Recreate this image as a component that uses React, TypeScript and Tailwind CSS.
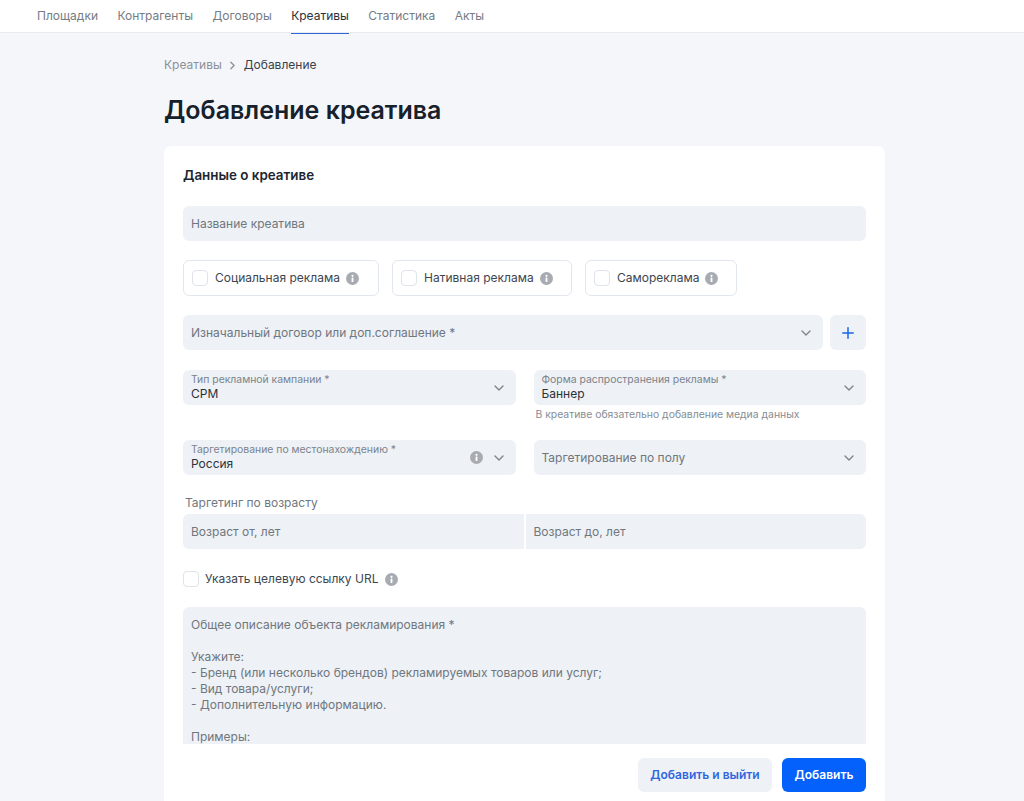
import { ChevronDown, ChevronRight, Plus } from 'lucide-react'

const tabs = ['Площадки', 'Контрагенты', 'Договоры', 'Креативы', 'Статистика', 'Акты']

function InfoIcon() {
  return (
    <svg viewBox="0 0 14 14" className="w-[13px] h-[13px] shrink-0">
      <circle cx="7" cy="7" r="7" fill="#a8acb2" />
      <rect x="6" y="6" width="2" height="4.8" rx="0.5" fill="#fff" />
      <circle cx="7" cy="4.1" r="1.15" fill="#fff" />
    </svg>
  )
}

function CheckCard({ label, width }: { label: string; width: string }) {
  return (
    <div className={`${width} h-[36px] flex items-center pl-[8px] rounded-[6px] border border-[#e2e6ee] bg-white`}>
      <span className="w-[16px] h-[16px] rounded-[4px] border border-[#dfe3ea] bg-white shrink-0" />
      <span className="ml-[7px] mr-[6px] text-[12px] text-[#3d4650]">{label}</span>
      <InfoIcon />
    </div>
  )
}

function Select({ label, value, info }: { label: string; value?: string; info?: boolean }) {
  return (
    <div className="h-[35px] bg-[#eef1f5] rounded-[6px] flex items-center pl-[8px] pr-[9px]">
      <div className="flex-1 min-w-0">
        {value ? (
          <>
            <div className="text-[10.4px] leading-[11px] text-[#7b838c]">{label}</div>
            <div className="mt-[1px] text-[12px] leading-[16px] text-[#2b323a]">{value}</div>
          </>
        ) : (
          <div className="text-[12px] text-[#6f777f]">{label}</div>
        )}
      </div>
      {info && <span className="mr-[8px]"><InfoIcon /></span>}
      <ChevronDown size={16} strokeWidth={2} className="text-[#7d848c]" />
    </div>
  )
}

export default function App() {
  return (
    <div className="h-[801px] overflow-hidden bg-[#f5f6fa] font-['Inter',sans-serif]">
      <nav className="h-[33px] bg-white border-b border-[#e9ebf0] flex gap-[19.4px] pl-[37px]">
        {tabs.map((t) => (
          <div
            key={t}
            className={
              t === 'Креативы'
                ? 'h-[34px] pt-[8px] text-[12px] leading-[16px] text-[#2b323a] border-b border-[#2f66d8]'
                : 'h-[33px] pt-[8px] text-[12px] leading-[16px] text-[#757c84]'
            }
          >
            {t}
          </div>
        ))}
      </nav>

      <main className="w-[721px] ml-[164px]">
        <div className="flex items-center h-[16px] mt-[24px] text-[12px] text-[#8b9197]">
          <span>Креативы</span>
          <ChevronRight size={13} strokeWidth={2.5} className="mx-[4px] text-[#8b9197]" />
          <span className="ml-[1px] text-[#3a4149]">Добавление</span>
        </div>
        <h1 className="mt-[21px] text-[25px] leading-[32px] font-semibold text-[#17212b]">Добавление креатива</h1>

        <section className="mt-[20px] bg-white rounded-t-[8px] pt-[21px] pl-[19px] pr-[19px] pb-[40px]">
          <h2 className="text-[13.4px] leading-[16px] font-semibold text-[#1d2630]">Данные о креативе</h2>

          <div className="mt-[23px] h-[35px] bg-[#eef1f5] rounded-[6px] flex items-center pl-[8px] pt-[1px] text-[12px] text-[#6f777f]">
            Название креатива
          </div>

          <div className="mt-[19px] flex gap-[13px]">
            <CheckCard label="Социальная реклама" width="w-[196px]" />
            <CheckCard label="Нативная реклама" width="w-[180px]" />
            <CheckCard label="Самореклама" width="w-[152px]" />
          </div>

          <div className="mt-[19px] flex gap-[7px]">
            <div className="flex-1">
              <Select label="Изначальный договор или доп.соглашение *" />
            </div>
            <div className="w-[36px] h-[35px] rounded-[6px] bg-[#eef1f5] flex items-center justify-center">
              <Plus size={18} strokeWidth={2} className="text-[#1a66e8]" />
            </div>
          </div>

          <div className="mt-[20px] grid grid-cols-2 gap-x-[18px]">
            <Select label="Тип рекламной кампании *" value="CPM" />
            <div>
              <Select label="Форма распространения рекламы *" value="Баннер" />
              <p className="h-[15px] mt-[2px] pl-[2px] text-[10.4px] leading-[15px] text-[#868d94]">
                В креативе обязательно добавление медиа данных
              </p>
            </div>
          </div>

          <div className="mt-[18px] grid grid-cols-2 gap-x-[18px]">
            <Select label="Таргетирование по местонахождению *" value="Россия" info />
            <Select label="Таргетирование по полу" />
          </div>

          <div className="mt-[20px] pl-[2px] text-[12px] leading-[16px] text-[#6f777f]">Таргетинг по возрасту</div>
          <div className="mt-[3px] flex gap-[2px]">
            <div className="flex-1 h-[35px] bg-[#eef1f5] rounded-l-[6px] flex items-center pl-[8px] pt-[1px] text-[12px] text-[#6f777f]">
              Возраст от, лет
            </div>
            <div className="flex-1 h-[35px] bg-[#eef1f5] rounded-r-[6px] flex items-center pl-[8px] pt-[1px] text-[12px] text-[#6f777f]">
              Возраст до, лет
            </div>
          </div>

          <div className="mt-[22px] h-[16px] flex items-center">
            <span className="w-[16px] h-[16px] rounded-[4px] border border-[#dfe3ea] bg-white shrink-0" />
            <span className="ml-[6px] mr-[7px] text-[12px] text-[#3d4650]">Указать целевую ссылку URL</span>
            <InfoIcon />
          </div>

          <div className="mt-[20px] h-[137px] overflow-hidden bg-[#eef1f5] rounded-t-[6px] pl-[8px] pt-[10px] text-[12px] leading-[16px] text-[#6f777f] whitespace-pre-line">
            {`Общее описание объекта рекламирования *

Укажите:
- Бренд (или несколько брендов) рекламируемых товаров или услуг;
- Вид товара/услуги;
- Дополнительную информацию.

Примеры:`}
          </div>

          <div className="mt-[14px] flex justify-end gap-[10px]">
            <button className="w-[134px] h-[34px] rounded-[6px] bg-[#eef1f5] text-[12px] font-semibold text-[#2f66e0]">
              Добавить и выйти
            </button>
            <button className="w-[84px] h-[34px] rounded-[6px] bg-[#0561fc] text-[12px] font-semibold text-white">
              Добавить
            </button>
          </div>
        </section>
      </main>
    </div>
  )
}
